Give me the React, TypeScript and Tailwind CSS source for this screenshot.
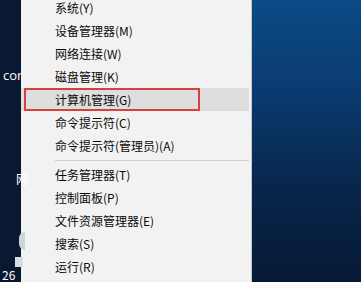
import React from "react";

const font = { fontFamily: '"Microsoft YaHei", "Noto Sans CJK SC", "Liberation Sans", sans-serif' };

function Row({ label, highlight }: { label: string; highlight?: boolean }) {
  return (
    <div className={`relative flex h-[23px] items-center pl-[34px] text-[12px] leading-[16px] text-[#0a0a0a] ${highlight ? "bg-[#dedede]" : ""}`}>
      {highlight && (
        <div className="absolute left-[3px] top-0 h-[23px] w-[176px] border-2 border-[#d8403e]" />
      )}
      <span className="relative">{label}</span>
    </div>
  );
}

export default function App() {
  const top = ["系统(Y)", "设备管理器(M)", "网络连接(W)", "磁盘管理(K)", "计算机管理(G)", "命令提示符(C)", "命令提示符(管理员)(A)"];
  const bottom = ["任务管理器(T)", "控制面板(P)", "文件资源管理器(E)", "搜索(S)", "运行(R)"];
  return (
    <div className="flex h-[282px] w-[361px] overflow-hidden" style={font}>
      <div className="relative w-[21px] shrink-0 bg-[#0b1831] text-white">
        <span className="absolute left-[3px] top-[66px] text-[13px]" style={{ fontFamily: '"Segoe UI", "Open Sans", sans-serif' }}>cor</span>
        <span className="absolute left-[16px] top-[170px] text-[12px]">网</span>
        <div className="absolute left-[19px] top-[232px] h-[18px] w-[6px] rounded-l-full bg-[#c9d4e0]" />
        <div className="absolute left-[15px] top-[257px] h-[10px] w-[8px] bg-[#d8dde3]" />
        <span className="absolute left-[2px] top-[268px] text-[12px] leading-[14px]">26</span>
      </div>
      <div className="w-[231px] shrink-0 border-r border-[#c8c8c8] bg-[#f2f2f2]">
        <div className="mt-[-4px] flex flex-col pr-[2px]">
          {top.map((t) => (
            <Row key={t} label={t} highlight={t === "计算机管理(G)"} />
          ))}
          <div className="flex h-[6px] items-center pl-[34px]">
            <div className="h-px w-full bg-[#cfcfcf]" />
          </div>
          {bottom.map((t) => (
            <Row key={t} label={t} />
          ))}
        </div>
      </div>
      <div className="flex-1 bg-[linear-gradient(180deg,#0c4a86_0%,#0a3a6e_35%,#08264c_65%,#061a36_100%)]" />
    </div>
  );
}
